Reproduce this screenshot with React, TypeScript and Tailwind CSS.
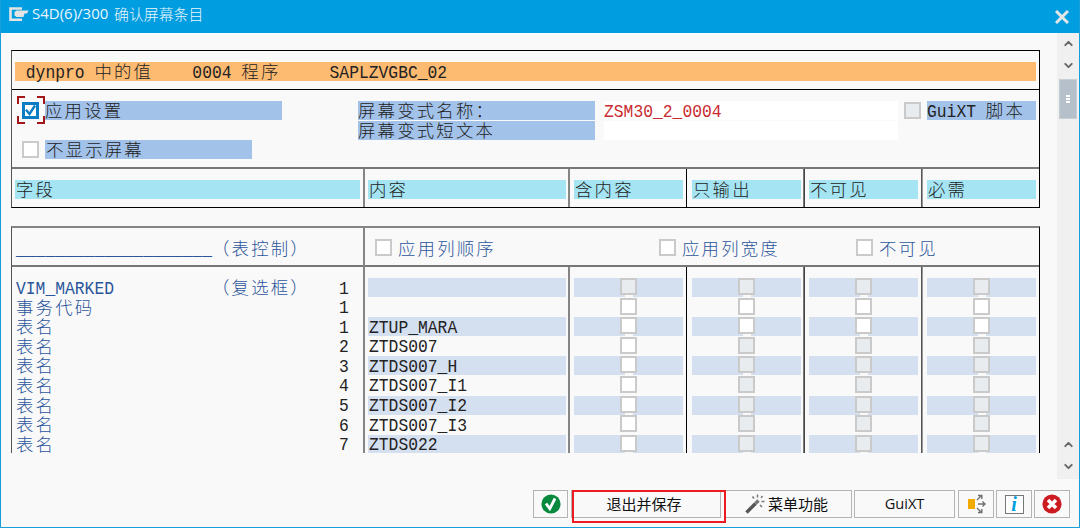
import type { ReactNode } from "react";
import clsx from "clsx";
import { ChevronDown, ChevronUp } from "lucide-react";

type Row = {
  label: string;
  kind?: string;
  index: number;
  content: string;
  // enabled state of the four checkbox columns
  enabled: boolean[];
};

const ALL = [true, true, true, true];
const NONE = [false, false, false, false];
const FIRST = [true, false, false, false];

const rows: Row[] = [
  { label: "VIM_MARKED", kind: "（复选框）", index: 1, content: "", enabled: NONE },
  { label: "事务代码", index: 1, content: "", enabled: ALL },
  { label: "表名", index: 1, content: "ZTUP_MARA", enabled: ALL },
  { label: "表名", index: 2, content: "ZTDS007", enabled: FIRST },
  { label: "表名", index: 3, content: "ZTDS007_H", enabled: FIRST },
  { label: "表名", index: 4, content: "ZTDS007_I1", enabled: FIRST },
  { label: "表名", index: 5, content: "ZTDS007_I2", enabled: FIRST },
  { label: "表名", index: 6, content: "ZTDS007_I3", enabled: FIRST },
  { label: "表名", index: 7, content: "ZTDS022", enabled: FIRST },
];

const columns = [
  { title: "含内容", className: "w-[118px] border-l-2 border-[#858585] pl-1" },
  { title: "只输出", className: "w-[117px] border-l border-black pl-[5px]" },
  { title: "不可见", className: "w-[118px] border-l border-[#777] pl-[5px] shadow-[inset_1px_0_0_#444]" },
  { title: "必需", className: "w-[118px] border-l border-[#555] pl-[5px] shadow-[inset_1px_0_0_#999]" },
];

// Terminal-like text: a latin character takes one cell, a chinese one takes two.
function Mono({ children, className }: { children: string; className?: string }) {
  const parts = children.split(/([\u2e80-\uffef]+)/).filter(Boolean);

  return (
    <span className={clsx("flex h-[19px] items-center whitespace-pre leading-[19px]", className)}>
      {parts.map((part, i) =>
        /[\u2e80-\uffef]/.test(part) ? (
          <span
            key={i}
            className="-mt-[2px] font-['Noto_Sans_CJK_SC',sans-serif] text-[17.4px] leading-[17px] font-light tracking-[2.2px]"
          >
            {part}
          </span>
        ) : (
          <span
            key={i}
            className="mt-px inline-block scale-y-[1.18] font-['Liberation_Mono',monospace] text-[16.33px] leading-[17px]"
          >
            {part}
          </span>
        ),
      )}
    </span>
  );
}

function Box({ enabled = true }: { enabled?: boolean }) {
  return (
    <span
      className={clsx(
        "block size-[17px] shrink-0 border-2 border-[#cacaca]",
        enabled ? "bg-white" : "bg-[#e8ecef]",
      )}
    />
  );
}

function CheckedBox() {
  return (
    <svg width="28" height="28" viewBox="0 0 28 28" className="shrink-0">
      <path
        d="M1 8V1H8M20 1H27V8M27 20V27H20M8 27H1V20"
        fill="none"
        stroke="#a3161a"
        strokeWidth="2"
      />
      <rect x="6.5" y="7.5" width="14" height="14" fill="#fff" stroke="#0a7dc4" strokeWidth="3" />
      <path d="M9 13.800l3.500 4.200L18 9.500" fill="none" stroke="#0a7dc4" strokeWidth="2.400" />
    </svg>
  );
}

function TitleBar() {
  return (
    <header className="flex h-[33px] items-start justify-between bg-[#009de0] pl-[8px] text-white">
      <div className="flex items-start">
        <svg width="20" height="15" viewBox="0 0 20 15" className="mt-[7px]">
          <path d="M13 1.500H1.500V12.800H13" fill="none" stroke="#e4e4e4" strokeWidth="2.600" />
          <path d="M5.500 5l2-1.500H19.500L18 6.500h-2.500L14.500 10H7.500L5.500 8.500z" fill="#e4e4e4" />
        </svg>
        <h1 className="ml-[3px] flex gap-[5px] whitespace-nowrap leading-[27px] text-[#e9f6fd]">
          <span className="w-[77px] font-['Open_Sans',sans-serif] text-[15px]">S4D(6)/300</span>
          <span className="font-['Noto_Sans_CJK_SC',sans-serif] text-[14.9px] font-light">
            确认屏幕条目
          </span>
        </h1>
      </div>
      <svg width="14" height="14" viewBox="0 0 14 14" className="mt-[10px] mr-[10px]">
        <path d="M1 1l12 12M13 1L1 13" stroke="#e6e6e6" strokeWidth="3" />
      </svg>
    </header>
  );
}

function ScrollBar() {
  return (
    <aside className="flex h-[446px] w-[22px] flex-col items-center bg-[#f0f0f0] text-[#666]">
      <ChevronUp className="mt-[4px] size-[13px] shrink-0" strokeWidth={3.5} />
      <ChevronDown className="mt-[9px] size-[13px] shrink-0" strokeWidth={3.5} />
      <div className="mt-[7px] flex h-[40px] w-[18px] shrink-0 flex-col items-center justify-center gap-px border border-[#c7cfd6] bg-[#b6c0ca]">
        <i className="h-[2px] w-1 bg-white" />
        <i className="h-[2px] w-1 bg-white" />
        <i className="h-[2px] w-1 bg-white" />
      </div>
      <ChevronUp className="mt-auto size-[13px] shrink-0" strokeWidth={3.5} />
      <ChevronDown className="mt-[9px] mb-[6px] size-[13px] shrink-0" strokeWidth={3.5} />
    </aside>
  );
}

function SettingsPanel() {
  return (
    <section className="h-[158px] w-[1029px] border border-black border-l-[#555] text-[#222]">
      <div className="h-[39px] border-b border-black pt-[11px] pl-[3px]">
        <Mono className="w-[1021px] bg-[#fdbb72] pl-px">{" dynpro 中的值    0004 程序     SAPLZVGBC_02"}</Mono>
      </div>

      <div className="flex h-[79px] items-start border-b-2 border-[#777]">
        <div className="w-[346px] pt-[6px] pl-[5px]">
          <div className="flex h-[28px] items-center">
            <CheckedBox />
            <Mono className="w-[237px] bg-[#a2c2ea]">应用设置</Mono>
          </div>
          <div className="mt-[16px] flex items-center pl-[5px]">
            <Box />
            <Mono className="ml-[6px] w-[207px] bg-[#a2c2ea] pl-px">不显示屏幕</Mono>
          </div>
        </div>

        <div className="flex w-[237px] flex-col gap-px pt-[11px]">
          <Mono className="bg-[#a2c2ea]">屏幕变式名称：</Mono>
          <Mono className="bg-[#a2c2ea]">屏幕变式短文本</Mono>
        </div>

        <div className="ml-[9px] flex w-[294px] flex-col gap-px pt-[11px]">
          <Mono className="bg-white text-[#c92a30]">ZSM30_2_0004</Mono>
          <Mono className="bg-white"> </Mono>
        </div>

        <div className="ml-[6px] flex items-center pt-[11px]">
          <Box enabled={false} />
          <Mono className="ml-[6px] w-[109px] bg-[#a2c2ea]">GuiXT 脚本</Mono>
        </div>
      </div>

      <div className="flex h-[38px]">
        <div className="w-[351px] pt-[11px] pl-[3px]">
          <Mono className="w-[345px] bg-[#a5e5f3] pl-px">字段</Mono>
        </div>
        <div className="w-[205px] border-l-2 border-[#858585] pt-[11px] pl-[3px]">
          <Mono className="w-[198px] bg-[#a5e5f3] pl-px">内容</Mono>
        </div>
        {columns.map((column) => (
          <div key={column.title} className={clsx("pt-[11px]", column.className)}>
            <Mono className="w-[109px] bg-[#a5e5f3] pl-px">{column.title}</Mono>
          </div>
        ))}
      </div>
    </section>
  );
}

function FieldsPanel() {
  return (
    <section className="mt-[18px] flex h-[227px] w-[1029px] overflow-hidden border-t-2 border-r border-l border-t-[#858585] border-r-black border-l-[#555] text-[#2b569c]">
      <div className="w-[351px] shrink-0">
        <div className="flex h-[39px] border-b-2 border-[#777] pt-[11px] pl-1">
          <Mono className="w-[196px]">____________________</Mono>
          <Mono>（表控制）</Mono>
        </div>
        <div className="pt-[11px] pl-1">
          {rows.map((row, i) => (
            <div key={i} className="flex h-[19.6px]">
              <Mono className="w-[196px]">{row.label}</Mono>
              <Mono className="w-[127px]">{row.kind ?? " "}</Mono>
              <Mono className="text-[#222]">{String(row.index)}</Mono>
            </div>
          ))}
        </div>
      </div>

      <div className="w-[676px] shrink-0 border-l-2 border-[#858585]">
        <div className="flex h-[39px] items-start border-b-2 border-[#777] pt-[10px] pl-[10px]">
          <div className="flex w-[284px] items-center gap-[6px]">
            <Box />
            <Mono className="pt-px">应用列顺序</Mono>
          </div>
          <div className="flex w-[197px] items-center gap-[6px]">
            <Box />
            <Mono className="pt-px">应用列宽度</Mono>
          </div>
          <div className="flex items-center gap-[6px]">
            <Box />
            <Mono className="pt-px">不可见</Mono>
          </div>
        </div>

        <div className="flex h-[187px]">
          <div className="w-[203px] pt-[11px] pl-[3px]">
            {rows.map((row, i) => (
              <div key={i} className="h-[19.6px]">
                <Mono className={clsx("w-[198px] pl-px text-[#222]", i % 2 === 0 && "bg-[#d4dff0]")}>
                  {row.content || " "}
                </Mono>
              </div>
            ))}
          </div>
          {columns.map((column, c) => (
            <div key={column.title} className={clsx("h-[188px] pt-[11px]", column.className)}>
              {rows.map((row, i) => (
                <div key={i} className="h-[19.6px]">
                  <div
                    className={clsx(
                      "flex h-[19px] w-[109px] flex-col items-center",
                      i % 2 === 0 && "bg-[#d4dff0]",
                    )}
                  >
                    <Box enabled={row.enabled[c]} />
                    <i className="h-[2px] w-2 bg-[#f9f9f9]" />
                  </div>
                </div>
              ))}
            </div>
          ))}
        </div>
      </div>
    </section>
  );
}

function FooterButton({ className, children }: { className?: string; children: ReactNode }) {
  return (
    <button
      type="button"
      className={clsx(
        "flex h-[28px] items-center justify-center border border-[#b4b4b4] font-['Noto_Sans_CJK_SC',sans-serif] text-[15px] whitespace-nowrap text-[#111]",
        className,
      )}
    >
      {children}
    </button>
  );
}

function Footer() {
  return (
    <footer className="flex pt-[11px] pl-[532px]">
      <FooterButton className="w-[35px]">
        <svg width="20" height="20" viewBox="0 0 20 20">
          <circle cx="10" cy="10" r="9.600" fill="#078a3e" />
          <path d="M5 9.500l3.800 5.200L14 4.500" fill="none" stroke="#fff" strokeWidth="2.800" />
        </svg>
      </FooterButton>
      <div className="relative ml-[3px]">
        <FooterButton className="w-[150px] pr-[4px]">退出并保存</FooterButton>
        <div className="absolute top-0 left-px h-[33px] w-[154px] border-2 border-[#ed1c24]" />
      </div>
      <FooterButton className="ml-[3px] w-[128px] gap-[3px] pr-[3px]">
        <svg width="20" height="20" viewBox="0 0 20 20">
          <path d="M1.500 18.500L10.500 9.500" stroke="#555" strokeWidth="3.400" />
          <path d="M10.500 9.500l3-3" stroke="#777" strokeWidth="3.400" />
          <path
            d="M12.500 .5v3M7.500 2.500l1.500 2M17.500 2l-1.500 1.800M16.500 7.500h3M15 11l2 2"
            stroke="#777"
            strokeWidth="1.500"
          />
        </svg>
        菜单功能
      </FooterButton>
      <FooterButton className="ml-[2px] w-[101px]">
        <span className="font-['Open_Sans',sans-serif] text-[14.6px]">GuiXT</span>
      </FooterButton>
      <FooterButton className="ml-[3px] w-[36px]">
        <svg width="19" height="20" viewBox="0 0 19 20">
          <path d="M1 5h7v10H1z" fill="#f2ab00" />
          <path
            d="M10 6l4.500-4.500M11 1.500h3.800V5M11 10h7M15.500 7.500L18 10l-2.500 2.500M10 14l4.500 4.500M11 18.500h3.800V15"
            fill="none"
            stroke="#707070"
            strokeWidth="1.400"
          />
        </svg>
      </FooterButton>
      <FooterButton className="ml-[2px] w-[36px]">
        <span className="flex h-[19px] w-[19px] items-center justify-center border border-[#777] bg-white font-['Liberation_Serif',serif] text-[20px] leading-none font-bold text-[#009de0] italic">
          i
        </span>
      </FooterButton>
      <FooterButton className="ml-[2px] w-[36px]">
        <svg width="20" height="20" viewBox="0 0 20 20">
          <circle cx="10" cy="10" r="9.600" fill="#cc1c22" />
          <path d="M6 6l8 8M14 6l-8 8" stroke="#fff" strokeWidth="3.600" />
        </svg>
      </FooterButton>
    </footer>
  );
}

export default function App() {
  return (
    <div className="h-[528px] w-[1080px] overflow-hidden border-r border-b border-l border-[#149fdb] bg-[#f9f9f9]">
      <TitleBar />
      <main className="flex h-[446px] justify-between">
        <div className="pt-[17px] pl-[10px]">
          <SettingsPanel />
          <FieldsPanel />
        </div>
        <ScrollBar />
      </main>
      <Footer />
    </div>
  );
}
